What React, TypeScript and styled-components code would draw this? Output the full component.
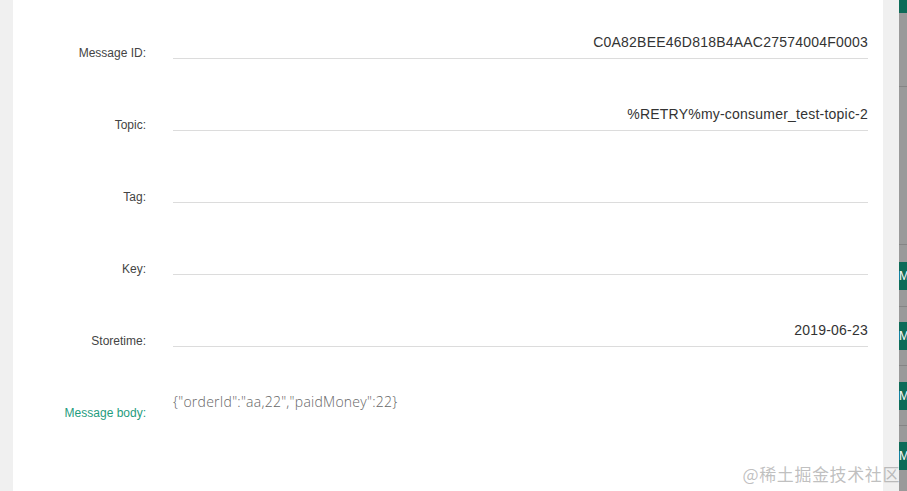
import React, { FC } from 'react';
import styled, { createGlobalStyle } from 'styled-components';

const GlobalStyle = createGlobalStyle`
  html, body {
    margin: 0;
    padding: 0;
    height: 491px;
    overflow: hidden;
    background: #f0f0f0;
  }
`;

const Screen = styled.div`
  display: flex;
  width: 907px;
  height: 491px;
  position: relative;
  font-family: 'Liberation Sans', Arial, sans-serif;
`;

const Gutter = styled.div<{ $width: number }>`
  width: ${(p) => p.$width}px;
  flex-shrink: 0;
  background: #f0f0f0;
`;

const Panel = styled.div`
  width: 870px;
  flex-shrink: 0;
  background: #fff;
  box-sizing: border-box;
  padding: 29px 15px 0 0;
  display: flex;
  flex-direction: column;
  gap: 42px;
`;

const Row = styled.div<{ $top?: boolean }>`
  display: grid;
  grid-template-columns: 133px 1fr;
  column-gap: 27px;
  align-items: ${(p) => (p.$top ? 'start' : 'end')};
  min-height: 30px;
`;

const Label = styled.div<{ $accent?: boolean }>`
  font-size: 12px;
  line-height: 14px;
  text-align: right;
  color: ${(p) => (p.$accent ? '#1f9c7e' : '#444')};
  margin-bottom: -1px;
`;

const BodyLabel = styled(Label)`
  margin-bottom: 0;
  padding-top: 17px;
`;

const Field = styled.div`
  font-size: 14px;
  line-height: 16px;
  letter-spacing: 0.22px;
  color: #333;
  text-align: right;
  padding-bottom: 8px;
  min-height: 16px;
  border-bottom: 1px solid #dcdcdc;
  white-space: nowrap;
`;

const Body = styled.div`
  font-family: 'Open Sans', sans-serif;
  font-weight: 300;
  font-size: 14px;
  line-height: 20px;
  letter-spacing: 0.25px;
  color: #666;
  padding-top: 3px;
`;

const Backdrop = styled.div`
  width: 8px;
  flex-shrink: 0;
  background: #9a9a9a;
  display: flex;
  flex-direction: column;
  overflow: hidden;
`;

const Slot = styled.div<{ $h: number; $kind: 'tab' | 'gap' | 'line' }>`
  height: ${(p) => p.$h}px;
  flex-shrink: 0;
  background: ${(p) =>
    p.$kind === 'tab' ? '#0d6b58' : p.$kind === 'line' ? '#858585' : 'transparent'};
  color: #fff;
  font-size: 12px;
  line-height: ${(p) => p.$h}px;
  white-space: nowrap;
  overflow: hidden;
`;

const Watermark = styled.div`
  position: absolute;
  right: 7px;
  bottom: 6px;
  font-family: 'Noto Sans CJK SC', sans-serif;
  font-size: 17px;
  line-height: 22px;
  color: rgba(150, 150, 150, 0.6);
  letter-spacing: 0.6px;
`;

const rows = [
  { label: 'Message ID:', value: 'C0A82BEE46D818B4AAC27574004F0003' },
  { label: 'Topic:', value: '%RETRY%my-consumer_test-topic-2' },
  { label: 'Tag:', value: '' },
  { label: 'Key:', value: '' },
  { label: 'Storetime:', value: '2019-06-23' },
];

const slots: { h: number; kind: 'tab' | 'gap' | 'line'; text?: string }[] = [
  { h: 13, kind: 'tab' },
  { h: 73, kind: 'gap' },
  { h: 1, kind: 'line' },
  { h: 157, kind: 'gap' },
  { h: 1, kind: 'line' },
  { h: 17, kind: 'gap' },
  { h: 28, kind: 'tab', text: 'M' },
  { h: 16, kind: 'gap' },
  { h: 1, kind: 'line' },
  { h: 15, kind: 'gap' },
  { h: 28, kind: 'tab', text: 'M' },
  { h: 15, kind: 'gap' },
  { h: 1, kind: 'line' },
  { h: 16, kind: 'gap' },
  { h: 28, kind: 'tab', text: 'M' },
  { h: 15, kind: 'gap' },
  { h: 1, kind: 'line' },
  { h: 16, kind: 'gap' },
  { h: 28, kind: 'tab', text: 'M' },
  { h: 21, kind: 'gap' },
];

const App: FC = () => (
  <>
    <GlobalStyle />
    <Screen>
      <Gutter $width={13} />
      <Panel>
        {rows.map((r) => (
          <Row key={r.label}>
            <Label>{r.label}</Label>
            <Field>{r.value}</Field>
          </Row>
        ))}
        <Row $top>
          <BodyLabel $accent>Message body:</BodyLabel>
          <Body>{'{"orderId":"aa,22","paidMoney":22}'}</Body>
        </Row>
      </Panel>
      <Gutter $width={16} />
      <Backdrop>
        {slots.map((s, i) => (
          <Slot key={i} $h={s.h} $kind={s.kind}>
            {s.text}
          </Slot>
        ))}
      </Backdrop>
      <Watermark>@稀土掘金技术社区</Watermark>
    </Screen>
  </>
);

export default App;
